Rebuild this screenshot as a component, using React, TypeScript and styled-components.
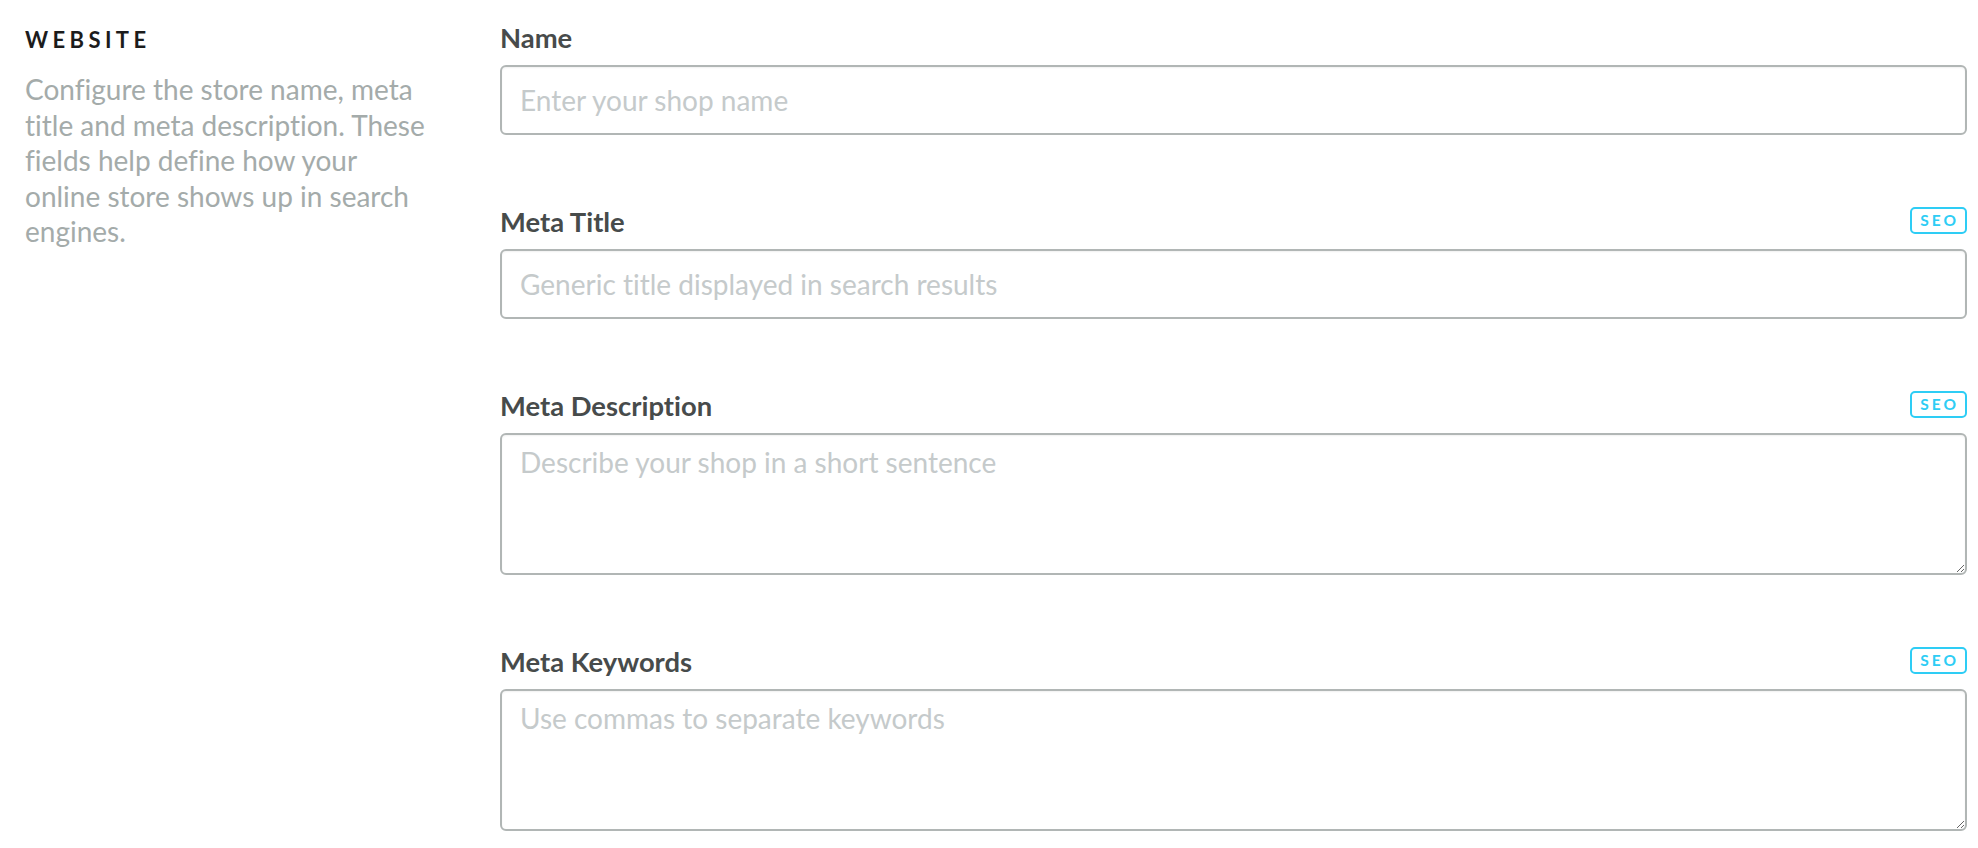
import { FC } from "react";
import styled, { createGlobalStyle } from "styled-components";

type Field = {
  label: string;
  placeholder: string;
  seo: boolean;
  multiline: boolean;
};

const fields: Field[] = [
  { label: "Name", placeholder: "Enter your shop name", seo: false, multiline: false },
  { label: "Meta Title", placeholder: "Generic title displayed in search results", seo: true, multiline: false },
  { label: "Meta Description", placeholder: "Describe your shop in a short sentence", seo: true, multiline: true },
  { label: "Meta Keywords", placeholder: "Use commas to separate keywords", seo: true, multiline: true },
];

const GlobalStyle = createGlobalStyle`
  html, body {
    margin: 0;
    padding: 0;
    background: #ffffff;
    font-family: Lato, "Noto Sans", "Liberation Sans", sans-serif;
    font-variant-ligatures: none;
  }
  * {
    box-sizing: border-box;
  }
`;

const Section = styled.div`
  display: grid;
  grid-template-columns: 475px 1fr;
  padding: 21px 11px 0 25px;
`;

const Aside = styled.div`
  padding-top: 7px;
`;

const Heading = styled.h2`
  margin: 0 0 20px;
  font-size: 22px;
  line-height: 24px;
  font-weight: 700;
  letter-spacing: 4.4px;
  color: #1c1c1c;
  text-transform: uppercase;
`;

const Description = styled.p`
  margin: 0;
  max-width: 404px;
  font-size: 28px;
  line-height: 35.5px;
  color: #a4abaa;
`;

const Form = styled.div`
  display: flex;
  flex-direction: column;
  gap: 70px;
`;

const Group = styled.div`
  display: flex;
  flex-direction: column;
`;

const LabelRow = styled.div`
  display: flex;
  align-items: center;
  justify-content: space-between;
  height: 34px;
  margin-bottom: 10px;
`;

const Label = styled.label`
  font-size: 27.4px;
  line-height: 30px;
  font-weight: 700;
  color: #474b4b;
`;

const Badge = styled.span`
  display: inline-flex;
  align-items: center;
  justify-content: center;
  height: 27px;
  margin-top: -4px;
  padding: 0 6px 0 8px;
  border: 2px solid #2ecdf5;
  border-radius: 5px;
  font-size: 15.5px;
  font-weight: 700;
  letter-spacing: 3px;
  color: #2ecdf5;
`;

const controlStyles = `
  width: 100%;
  border: 2px solid #b1b6b5;
  border-radius: 6px;
  box-shadow: inset 0 1px 2px rgba(0, 0, 0, 0.06);
  padding: 0 18px;
  font-family: Lato, "Noto Sans", "Liberation Sans", sans-serif;
  font-variant-ligatures: none;
  font-size: 28px;
  color: #333;
  background: #fff;
  outline: none;
  &::placeholder {
    color: #c5cacb;
  }
`;

const Input = styled.input`
  ${controlStyles}
  height: 70px;
`;

const TextArea = styled.textarea`
  ${controlStyles}
  height: 142px;
  padding-top: 10px;
  line-height: 34px;
  resize: vertical;
`;

const App: FC = () => {
  return (
    <>
      <GlobalStyle />
      <Section>
        <Aside>
          <Heading>Website</Heading>
          <Description>
            Configure the store name, meta title and meta description. These fields help define how your
            online store shows up in search engines.
          </Description>
        </Aside>
        <Form>
          {fields.map((f) => (
            <Group key={f.label}>
              <LabelRow>
                <Label>{f.label}</Label>
                {f.seo && <Badge>SEO</Badge>}
              </LabelRow>
              {f.multiline ? <TextArea placeholder={f.placeholder} /> : <Input placeholder={f.placeholder} />}
            </Group>
          ))}
        </Form>
      </Section>
    </>
  );
};

export default App;
